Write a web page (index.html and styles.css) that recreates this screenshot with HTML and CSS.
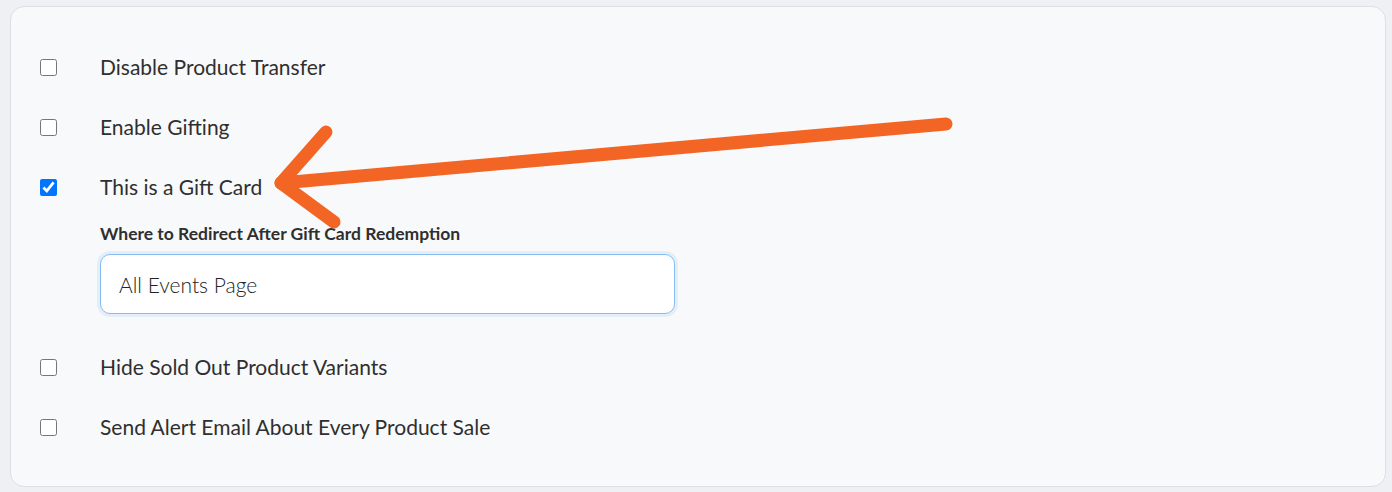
FILE: index.html
```html
<!DOCTYPE html>
<html>
<head>
<meta charset="utf-8">
<link rel="stylesheet" href="styles.css">
</head>
<body>
<div class="card">
  <div class="row">
    <input type="checkbox" class="check">
    <span class="label">Disable Product Transfer</span>
  </div>
  <div class="row">
    <input type="checkbox" class="check">
    <span class="label">Enable Gifting</span>
  </div>
  <div class="row">
    <input type="checkbox" class="check" checked>
    <span class="label">This is a Gift Card</span>
  </div>
  <div class="sub">
    <div class="sub-label">Where to Redirect After Gift Card Redemption</div>
    <div class="field">All Events Page</div>
  </div>
  <div class="row">
    <input type="checkbox" class="check">
    <span class="label">Hide Sold Out Product Variants</span>
  </div>
  <div class="row">
    <input type="checkbox" class="check">
    <span class="label">Send Alert Email About Every Product Sale</span>
  </div>
</div>
<svg class="arrow" width="1392" height="492" viewBox="0 0 1392 492">
  <g fill="none" stroke="#f26524" stroke-width="13" stroke-linecap="round" stroke-linejoin="round">
    <path d="M946 124 L281 183"/>
    <path d="M326 132 L281 183 L334 222"/>
  </g>
</svg>
</body>
</html>
```
FILE: styles.css
```css
html, body {
  margin: 0;
  padding: 0;
}
body {
  background: #eff0f4;
  font-family: Lato, "Open Sans", sans-serif;
  color: #2f2f2f;
  width: 1392px;
  height: 492px;
  overflow: hidden;
  position: relative;
}
.card {
  margin: 6px 6px 0 10px;
  height: 481px;
  box-sizing: border-box;
  background: #f8f9fb;
  border: 1px solid #dddee6;
  border-radius: 14px;
  padding: 30px 29px 29px 29px;
}
.row {
  display: flex;
  align-items: center;
  height: 60px;
}
.check {
  margin: 0 43px 0 0;
  width: 17px;
  height: 17px;
  flex: none;
}
.label {
  font-size: 21px;
  line-height: 24px;
}
.sub {
  margin-left: 60px;
  padding-top: 6px;
  padding-bottom: 23px;
}
.sub-label {
  font-size: 17.5px;
  font-weight: 700;
  line-height: 22px;
  letter-spacing: 0;
}
.field {
  margin-top: 9px;
  width: 575px;
  height: 60px;
  box-sizing: border-box;
  background: #ffffff;
  border: 1px solid #86bdf0;
  border-radius: 10px;
  box-shadow: 0 0 0 3px rgba(140, 190, 240, 0.18);
  padding: 0 18px;
  display: flex;
  align-items: center;
  font-size: 21px;
  font-weight: 300;
  color: #222222;
}
.arrow {
  position: absolute;
  left: 0;
  top: 0;
  pointer-events: none;
}
```
